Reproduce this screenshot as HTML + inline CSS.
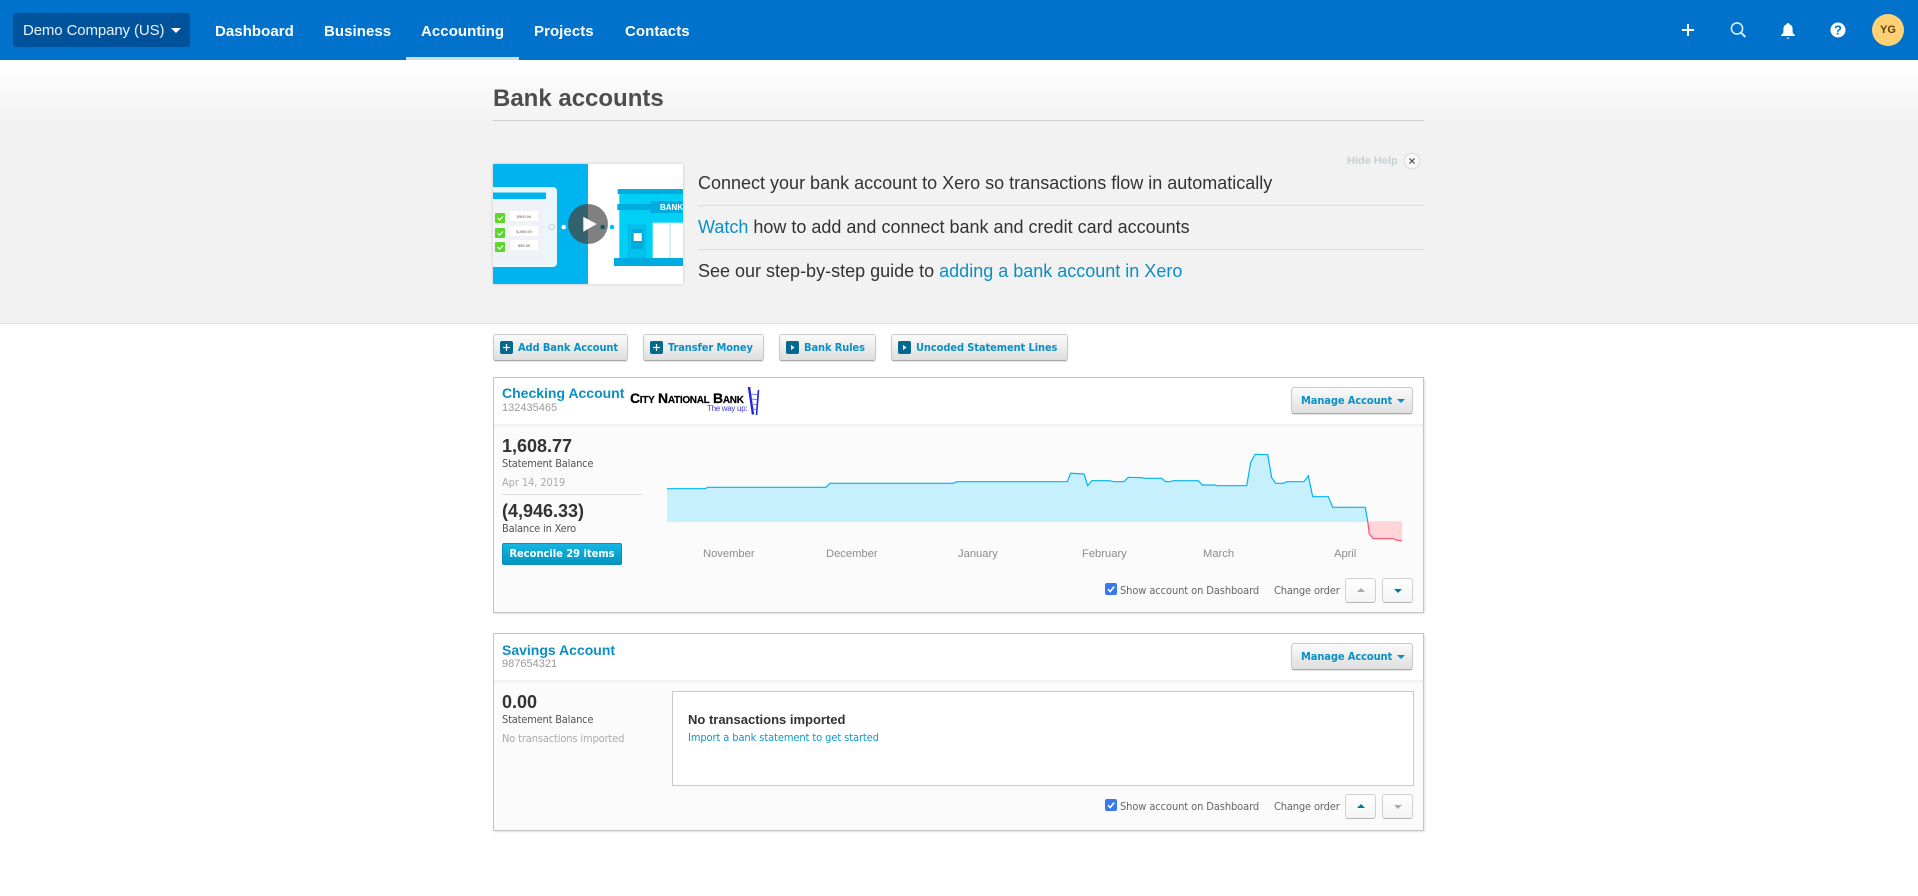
<!DOCTYPE html>
<html lang="en">
<head>
<meta charset="utf-8">
<title>Bank accounts</title>
<style>
html,body{margin:0;padding:0;background:#fff;}
body{width:1918px;height:896px;position:relative;overflow:hidden;font-family:"Liberation Sans",Arial,sans-serif;color:#333;}
.a{position:absolute;white-space:nowrap;}
.t{position:absolute;white-space:nowrap;line-height:16px;}
.nav{position:absolute;top:23px;line-height:18px;font-size:15px;font-weight:bold;color:#fff;white-space:nowrap;letter-spacing:.06px;}
.h{font-size:18px;color:#333;line-height:22px;position:absolute;left:698px;white-space:nowrap;}
.lnk{color:#0a8fc4;}
.cond{font-family:"DejaVu Sans Condensed","DejaVu Sans",sans-serif;font-stretch:condensed;letter-spacing:-.1px;}
.btn{position:absolute;box-sizing:border-box;height:27px;border:1px solid #c9c9c9;border-bottom-color:#a8a8a8;border-radius:3px;background:linear-gradient(#fbfbfb,#dedede);box-shadow:0 1px 1px rgba(0,0,0,.12);}
.btn span.l{position:absolute;top:5px;line-height:15px;font-size:11px;font-weight:bold;color:#0a8fc4;white-space:nowrap;}
.ic{position:absolute;left:6px;top:6px;width:13px;height:13px;background:#04698e;border-radius:2px;}
.card{position:absolute;left:493px;width:931px;box-sizing:border-box;border:1px solid #c4c4c4;background:#fbfbfb;box-shadow:1px 1px 2px rgba(0,0,0,.12);}
.chd{position:absolute;left:0;top:0;right:0;height:46px;background:#fff;}
.chs{position:absolute;left:0;top:46px;right:0;height:5px;background:linear-gradient(#f0f0f0,#fbfbfb);}
.ord{position:absolute;box-sizing:border-box;width:31px;height:25px;border:1px solid #d0d0d0;border-bottom-color:#b5b5b5;border-radius:3px;background:linear-gradient(#fff,#f4f4f4);}
.up,.dn{position:absolute;left:11px;width:0;height:0;border-left:4px solid transparent;border-right:4px solid transparent;}
.up{top:9px;border-bottom:4px solid #aaa;}
.dn{top:10px;border-top:4px solid #aaa;}
.on.up{border-bottom-color:#04789f;}
.on.dn{border-top-color:#04789f;}
.cb{position:absolute;width:12px;height:12px;border-radius:2px;background:#3b78f0;}
.big{font-size:18px;font-weight:bold;line-height:20px;color:#333;}
.sm{font-size:11px;color:#555;}
.mo{position:absolute;top:546px;line-height:16px;font-size:11.2px;color:#8c8c8c;white-space:nowrap;}
</style>
</head>
<body>

<!-- top bar -->
<div class="a" style="left:0;top:0;width:1918px;height:60px;background:#0072cc;"></div>
<div class="a" style="left:13px;top:13px;width:177px;height:34px;background:#00539b;border-radius:3px;"></div>
<div class="a" style="left:23px;top:22px;font-size:15px;line-height:18px;color:#e8f2fa;letter-spacing:-.12px;">Demo Company (US)</div>
<div class="a" style="left:171px;top:28px;width:0;height:0;border-left:5px solid transparent;border-right:5px solid transparent;border-top:5px solid #fff;"></div>
<div class="nav" style="left:215px;">Dashboard</div>
<div class="nav" style="left:324px;">Business</div>
<div class="nav" style="left:421px;">Accounting</div>
<div class="nav" style="left:534px;">Projects</div>
<div class="nav" style="left:625px;">Contacts</div>
<div class="a" style="left:406px;top:57px;width:113px;height:3px;background:#c5dff3;"></div>

<svg class="a" style="left:1675px;top:17px;" width="180" height="26" viewBox="0 0 180 26">
  <path d="M13 7v12M7 13h12" stroke="#fff" stroke-width="2" fill="none"/>
  <circle cx="62" cy="11.5" r="5.6" stroke="#d9ecfa" stroke-width="1.6" fill="none"/>
  <path d="M66 15.6l4.4 4.4" stroke="#d9ecfa" stroke-width="2" fill="none"/>
  <path d="M113 6c-.9 0-1.3.6-1.4 1.2-2.2.7-3.2 2.6-3.2 5v2.700c0 1.300-1 2.300-2.400 3.100v1h14v-1c-1.400-.8-2.400-1.800-2.400-3.100v-2.700c0-2.400-1-4.300-3.200-5-.1-.6-.5-1.200-1.400-1.200z" fill="#fff"/>
  <path d="M111.500 20.600h3l-.4 1.400h-2.200z" fill="#a8d2f0"/>
  <circle cx="163" cy="13" r="7.500" fill="#fff"/>
  <text x="163" y="17.500" font-family="Liberation Sans,sans-serif" font-size="13" font-weight="bold" fill="#0072cc" text-anchor="middle">?</text>
</svg>
<div class="a" style="left:1872px;top:14px;width:32px;height:32px;border-radius:50%;background:#ffd175;color:#5c3d10;font-size:11px;font-weight:bold;line-height:32px;text-align:center;">YG</div>

<!-- help band -->
<div class="a" style="left:0;top:60px;width:1918px;height:263px;box-sizing:content-box;background:linear-gradient(#fff 0,#f2f2f2 62px,#f2f2f2 100%);border-bottom:1px solid #dedede;"></div>
<div class="a" style="left:493px;top:85px;font-size:24px;font-weight:bold;line-height:28px;color:#4d4d4d;">Bank accounts</div>
<div class="a" style="left:493px;top:120px;width:931px;height:1px;background:#cdcdcd;"></div>

<!-- video thumb -->
<svg class="a" style="left:493px;top:164px;box-shadow:0 0 3px rgba(0,0,0,.18);" width="190" height="120" viewBox="0 0 190 120">
  <rect width="190" height="120" fill="#fff"/>
  <rect width="95" height="120" fill="#00b4ef"/>
  <rect x="-6" y="23" width="70" height="80" rx="4" fill="#e9f7fc"/>
  <rect x="-6" y="28.500" width="59" height="70" fill="#eff3f7"/>
  <rect x="-6" y="28.500" width="59" height="6.500" fill="#00b4ef"/>
  <circle cx="58.700" cy="63" r="2.700" fill="none" stroke="#c5d3d9"/>
  <rect x="2" y="49" width="10" height="10" rx="1" fill="#5ed62a"/><path d="M4.500 54l2 2 3.500-3.500" stroke="#fff" stroke-width="1.200" fill="none"/>
  <rect x="2" y="64" width="10" height="10" rx="1" fill="#5ed62a"/><path d="M4.500 69l2 2 3.500-3.500" stroke="#fff" stroke-width="1.200" fill="none"/>
  <rect x="2" y="78" width="10" height="10" rx="1" fill="#5ed62a"/><path d="M4.500 83l2 2 3.500-3.500" stroke="#fff" stroke-width="1.200" fill="none"/>
  <rect x="17" y="47" width="28" height="10" fill="#fff"/><rect x="17" y="62" width="28" height="10" fill="#fff"/><rect x="17" y="76" width="28" height="10" fill="#fff"/>
  <text x="31" y="54" font-size="4" font-weight="bold" fill="#888" text-anchor="middle" font-family="Liberation Sans,sans-serif">$500.00</text>
  <text x="31" y="69" font-size="4" font-weight="bold" fill="#888" text-anchor="middle" font-family="Liberation Sans,sans-serif">$,500.00</text>
  <text x="31" y="83" font-size="4" font-weight="bold" fill="#888" text-anchor="middle" font-family="Liberation Sans,sans-serif">$50.00</text>
  <circle cx="70.700" cy="63" r="2.300" fill="#fff"/>
  <circle cx="119" cy="63" r="2.300" fill="#00c3f2"/>
  <!-- bank -->
  <rect x="126.300" y="29" width="64" height="65" fill="#00d0f5"/>
  <rect x="124.700" y="25" width="66" height="5" fill="#00acdf"/>
  <rect x="124.300" y="40" width="40" height="6" fill="#00acdf"/>
  <rect x="157" y="37" width="40" height="12" rx="2" fill="#00acdf"/>
  <text x="167" y="46" font-size="8" font-weight="bold" fill="#fff" font-family="Liberation Sans,sans-serif">BANK</text>
  <rect x="135.300" y="61" width="17.500" height="33" fill="#00c3ec" stroke="#00acdf" stroke-width=".6"/>
  <rect x="138" y="65" width="13" height="20" fill="#00acdf"/>
  <rect x="140.700" y="69" width="8" height="8" fill="#fff"/>
  <rect x="159.700" y="58.700" width="31" height="35.300" fill="#fff"/>
  <rect x="176.500" y="58.700" width="1" height="35.300" fill="#9fe3f5"/>
  <rect x="121" y="94" width="70" height="8" fill="#00acdf"/>
  <!-- play -->
  <circle cx="80" cy="63" r="2.300" fill="#888"/><circle cx="89.700" cy="63" r="2.300" fill="#888"/>
  <path d="M95 40a20 20 0 0 0 0 40z" fill="#33626f"/>
  <path d="M95 40a20 20 0 0 1 0 40z" fill="#808080"/>
  <circle cx="109.700" cy="63" r="2.300" fill="#14566d"/>
  <path d="M90.300 52.700v15l13.400-7.700z" fill="#fff"/>
</svg>

<div class="h" style="top:172px;">Connect your bank account to Xero so transactions flow in automatically</div>
<div class="a" style="left:698px;top:205px;width:726px;height:1px;background:#dcdcdc;"></div>
<div class="h" style="top:216px;"><span class="lnk">Watch</span> how to add and connect bank and credit card accounts</div>
<div class="a" style="left:698px;top:249px;width:726px;height:1px;background:#dcdcdc;"></div>
<div class="h" style="top:260px;">See our step-by-step guide to <span class="lnk">adding a bank account in Xero</span></div>

<div class="a" style="left:1347px;top:154px;font-size:11px;font-weight:bold;line-height:14px;color:#c7d1d4;">Hide Help</div>
<svg class="a" style="left:1403px;top:152px;" width="18" height="18" viewBox="0 0 18 18">
  <circle cx="9" cy="9" r="7.800" fill="#f8f8f8" stroke="#dcdcdc"/>
  <path d="M6.400 6.400l5.200 5.200M11.600 6.400l-5.200 5.200" stroke="#555" stroke-width="1.200"/>
</svg>

<!-- action buttons -->
<div class="btn" style="left:493px;top:334px;width:135px;"><i class="ic"></i><svg class="a" style="left:6px;top:6px" width="13" height="13"><path d="M6.500 3v7M3 6.500h7" stroke="#fff" stroke-width="1.200"/></svg><span class="l cond" style="left:24px;">Add Bank Account</span></div>
<div class="btn" style="left:643px;top:334px;width:121px;"><i class="ic"></i><svg class="a" style="left:6px;top:6px" width="13" height="13"><path d="M6.500 3v7M3 6.500h7" stroke="#fff" stroke-width="1.200"/></svg><span class="l cond" style="left:24px;">Transfer Money</span></div>
<div class="btn" style="left:779px;top:334px;width:97px;"><i class="ic"></i><svg class="a" style="left:6px;top:6px" width="13" height="13"><path d="M5 4l3.500 2.500L5 9z" fill="#fff"/></svg><span class="l cond" style="left:24px;">Bank Rules</span></div>
<div class="btn" style="left:891px;top:334px;width:177px;"><i class="ic"></i><svg class="a" style="left:6px;top:6px" width="13" height="13"><path d="M5 4l3.500 2.500L5 9z" fill="#fff"/></svg><span class="l cond" style="left:24px;">Uncoded Statement Lines</span></div>

<!-- card 1 -->
<div class="card" style="top:377px;height:236px;">
  <div class="chd"></div><div class="chs"></div>
</div>
<div class="a" style="left:502px;top:385px;font-size:14px;font-weight:bold;line-height:16px;color:#0a8fc4;">Checking Account</div>
<div class="a" style="left:502px;top:401px;font-size:11px;line-height:14px;color:#999;">132435465</div>

<!-- bank logo -->
<div class="a" style="left:630px;top:389px;font-size:14px;font-weight:bold;line-height:18px;color:#000;font-variant:small-caps;letter-spacing:-.3px;-webkit-text-stroke:.2px #000;">City National Bank</div>
<div class="a" style="left:707px;top:404px;font-size:8px;line-height:10px;color:#3b3bd8;letter-spacing:-.3px;">The way up:</div>
<svg class="a" style="left:746px;top:385px;" width="16" height="32" viewBox="0 0 16 32">
  <path d="M3 2l4 27.500" stroke="#2222dd" stroke-width="2.400" fill="none"/>
  <path d="M12.500 5l-2 25" stroke="#2222dd" stroke-width="1.600" fill="none"/>
  <path d="M4.500 9l7 .6M5.200 14l6 .6M5.800 19l5 .6M6.500 24l4 .6" stroke="#7a7aee" stroke-width="1" fill="none"/>
</svg>

<div class="btn" style="left:1291px;top:387px;width:122px;"><span class="l cond" style="left:9px;top:5px;">Manage Account</span><i class="a" style="left:105px;top:11px;width:0;height:0;border-left:4px solid transparent;border-right:4px solid transparent;border-top:4px solid #0a8fc4;"></i></div>

<div class="a big" style="left:502px;top:436px;">1,608.77</div>
<div class="t sm cond" style="left:502px;top:456px;letter-spacing:-.2px;">Statement Balance</div>
<div class="t sm cond" style="left:502px;top:475px;color:#aaa;">Apr 14, 2019</div>
<div class="a" style="left:502px;top:494px;width:140px;height:1px;background:#dcdcdc;"></div>
<div class="a big" style="left:502px;top:501px;">(4,946.33)</div>
<div class="t sm cond" style="left:502px;top:521px;letter-spacing:-.2px;">Balance in Xero</div>
<div class="a" style="left:502px;top:543px;width:120px;height:22px;box-sizing:border-box;border-radius:2px;background:linear-gradient(#17b5e2,#0095c1);border:1px solid #0b8fb8;color:#fff;font-size:11px;font-weight:bold;line-height:20px;text-align:center;" ><span class="cond" style="letter-spacing:0;">Reconcile 29 items</span></div>

<!-- chart -->
<svg class="a" style="left:660px;top:445px;" width="750" height="100" viewBox="660 445 750 100">
  <path d="M667 521.300V488.700L705 488.700 708 487.300 826 487.300 830 483.300 953 483.300 957 481.700 1067.300 481.700 1070.700 473.300 1084 474 1087.700 485.700 1091.700 480.700 1109.300 480.700 1114 481.700 1124 481.700 1128.300 477.300 1141.700 477.700 1145 478.300 1161.700 478.300 1165.700 481.700 1170 481.700 1173.300 480.700 1198.300 480.700 1202.300 485 1215 485 1216.700 485.700 1246.700 485.700 1250.700 462.300 1255 454.300 1267.700 454.700 1271.700 477.700 1275.700 483.300 1283.300 483.300 1286.700 481.700 1304 481.700 1308.300 475.700 1312.700 496.700 1328.300 496.700 1332.700 507.300 1365.300 507.300 1367.700 521.300Z" fill="#c7f0ff"/>
  <path d="M667 521.500H1367.700" stroke="#dfe6e8" stroke-width="1"/>
  <path d="M1367.700 521.300L1369.300 534 1373.300 538.700 1393.300 538.700 1397.300 540.300 1402 540.700V521.300Z" fill="#ffd5d9"/>
  <path d="M667 488.700L705 488.700 708 487.300 826 487.300 830 483.300 953 483.300 957 481.700 1067.300 481.700 1070.700 473.300 1084 474 1087.700 485.700 1091.700 480.700 1109.300 480.700 1114 481.700 1124 481.700 1128.300 477.300 1141.700 477.700 1145 478.300 1161.700 478.300 1165.700 481.700 1170 481.700 1173.300 480.700 1198.300 480.700 1202.300 485 1215 485 1216.700 485.700 1246.700 485.700 1250.700 462.300 1255 454.300 1267.700 454.700 1271.700 477.700 1275.700 483.300 1283.300 483.300 1286.700 481.700 1304 481.700 1308.300 475.700 1312.700 496.700 1328.300 496.700 1332.700 507.300 1365.300 507.300 1367.700 521.300" fill="none" stroke="#00b4ef" stroke-width="1.200"/>
  <path d="M1367.700 521.300L1369.300 534 1373.300 538.700 1393.300 538.700 1397.300 540.300 1402 540.700" fill="none" stroke="#ff4d6a" stroke-width="1.200"/>
</svg>
<div class="mo" style="left:703px;">November</div>
<div class="mo" style="left:826px;">December</div>
<div class="mo" style="left:958px;">January</div>
<div class="mo" style="left:1082px;">February</div>
<div class="mo" style="left:1203px;">March</div>
<div class="mo" style="left:1334px;">April</div>

<div class="cb" style="left:1105px;top:583px;"></div>
<svg class="a" style="left:1105px;top:583px;" width="12" height="12"><path d="M3 6.200l2.200 2.300L9.200 3.500" stroke="#fff" stroke-width="1.600" fill="none"/></svg>
<div class="t sm cond" style="left:1120px;top:583px;color:#666;">Show account on Dashboard</div>
<div class="t sm cond" style="left:1274px;top:583px;color:#666;letter-spacing:-.15px;">Change order</div>
<div class="ord" style="left:1345px;top:578px;"><i class="up"></i></div>
<div class="ord" style="left:1382px;top:578px;"><i class="dn on"></i></div>

<!-- card 2 -->
<div class="card" style="top:633px;height:198px;">
  <div class="chd"></div><div class="chs"></div>
</div>
<div class="a" style="left:502px;top:642px;font-size:14px;font-weight:bold;line-height:16px;color:#0a8fc4;">Savings Account</div>
<div class="a" style="left:502px;top:657px;font-size:11px;line-height:14px;color:#999;">987654321</div>
<div class="btn" style="left:1291px;top:643px;width:122px;"><span class="l cond" style="left:9px;top:5px;">Manage Account</span><i class="a" style="left:105px;top:11px;width:0;height:0;border-left:4px solid transparent;border-right:4px solid transparent;border-top:4px solid #0a8fc4;"></i></div>

<div class="a big" style="left:502px;top:692px;">0.00</div>
<div class="t sm cond" style="left:502px;top:712px;letter-spacing:-.2px;">Statement Balance</div>
<div class="t sm cond" style="left:502px;top:731px;color:#aaa;letter-spacing:-.15px;">No transactions imported</div>

<div class="a" style="left:672px;top:691px;width:742px;height:95px;box-sizing:border-box;background:#fff;border:1px solid #c9c9c9;"></div>
<div class="a" style="left:688px;top:712px;font-size:13px;font-weight:bold;line-height:16px;color:#333;">No transactions imported</div>
<div class="t cond" style="left:688px;top:730px;font-size:11px;color:#0a9bc9;">Import a bank statement to get started</div>

<div class="cb" style="left:1105px;top:799px;"></div>
<svg class="a" style="left:1105px;top:799px;" width="12" height="12"><path d="M3 6.200l2.200 2.300L9.200 3.500" stroke="#fff" stroke-width="1.600" fill="none"/></svg>
<div class="t sm cond" style="left:1120px;top:799px;color:#666;">Show account on Dashboard</div>
<div class="t sm cond" style="left:1274px;top:799px;color:#666;letter-spacing:-.15px;">Change order</div>
<div class="ord" style="left:1345px;top:794px;"><i class="up on"></i></div>
<div class="ord" style="left:1382px;top:794px;"><i class="dn"></i></div>

</body>
</html>
